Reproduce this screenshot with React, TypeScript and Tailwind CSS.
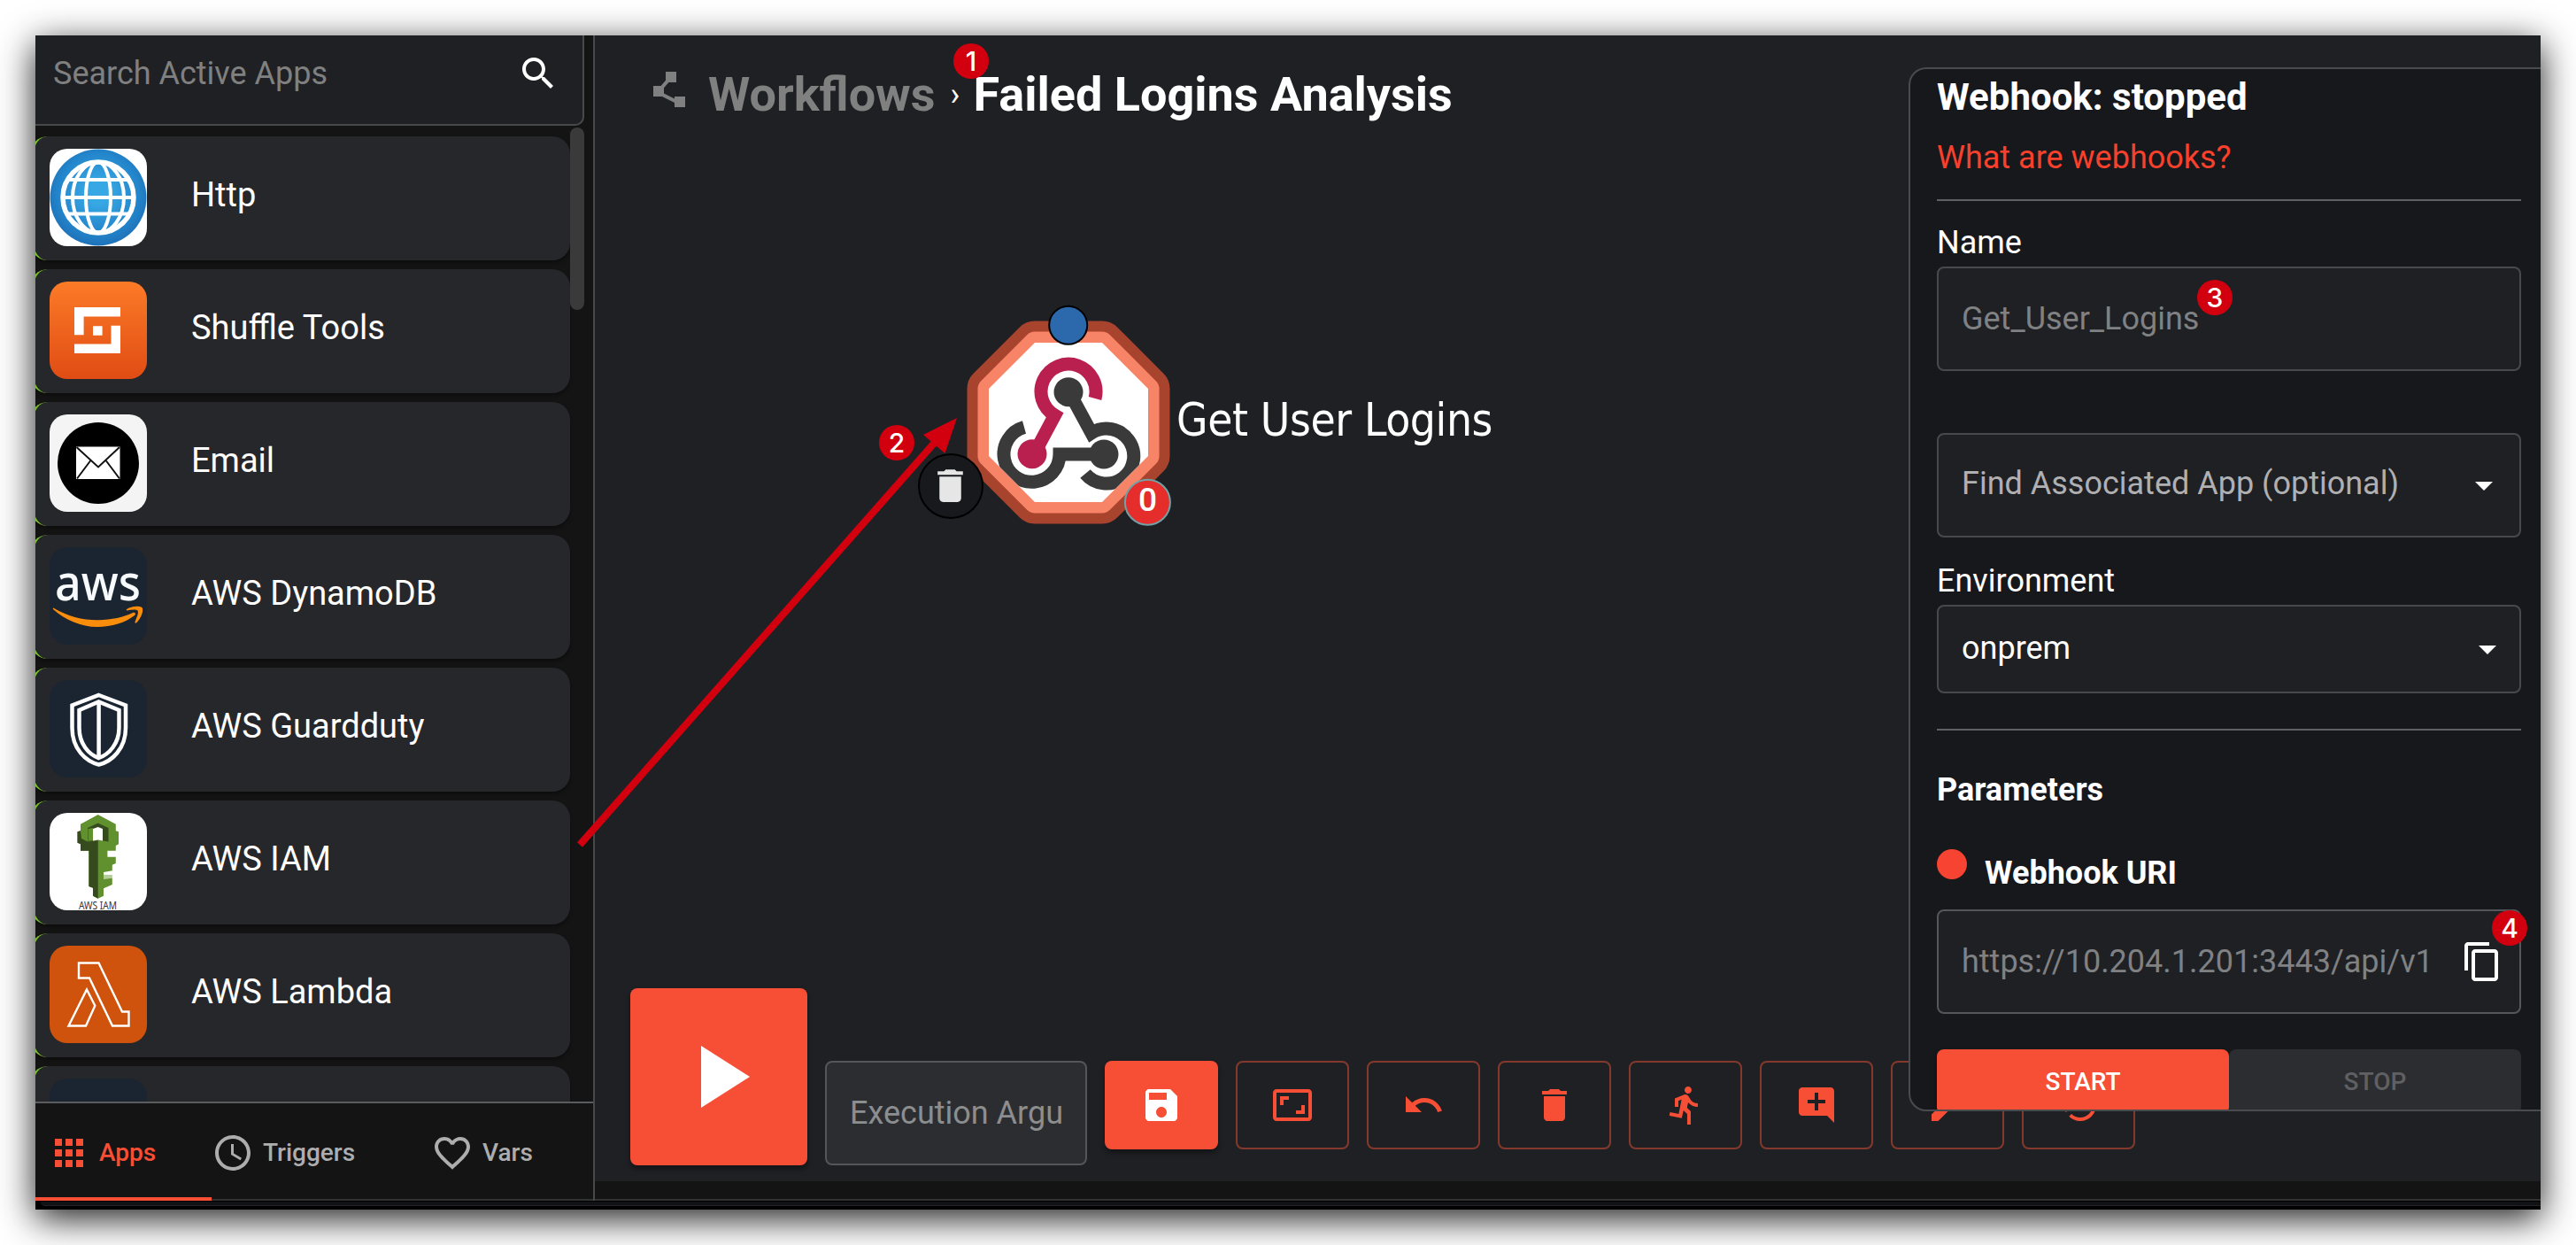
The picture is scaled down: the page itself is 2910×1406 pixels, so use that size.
import React from "react";

const PATHS = {
  search:
    "M15.5 14h-.79l-.28-.27C15.41 12.59 16 11.11 16 9.5 16 5.91 13.09 3 9.5 3S3 5.91 3 9.5 5.91 16 9.5 16c1.61 0 3.09-.59 4.23-1.57l.27.28v.79l5 4.99L20.49 19zm-6 0C7.01 14 5 11.99 5 9.5S7.01 5 9.5 5 14 7.01 14 9.5 11.99 14 9.5 14",
  polyline: "M15 16v1.26l-6-3v-3.17L11.7 8H16V2h-6v4.9L7.3 10H3v6h5l7 3.5V22h6v-6z",
  apps: "M4 8h4V4H4zm6 12h4v-4h-4zm-6 0h4v-4H4zm0-6h4v-4H4zm6 0h4v-4h-4zm6-10v4h4V4zm-6 4h4V4h-4zm6 6h4v-4h-4zm0 6h4v-4h-4z",
  clock:
    "M11.99 2C6.47 2 2 6.48 2 12s4.47 10 9.99 10C17.52 22 22 17.52 22 12S17.52 2 11.99 2M12 20c-4.42 0-8-3.58-8-8s3.58-8 8-8 8 3.58 8 8-3.58 8-8 8m.5-13H11v6l5.25 3.15.75-1.23-4.5-2.67z",
  heart:
    "M16.5 3c-1.74 0-3.41.81-4.5 2.09C10.91 3.81 9.24 3 7.5 3 4.42 3 2 5.42 2 8.5c0 3.78 3.4 6.86 8.55 11.54L12 21.35l1.45-1.32C18.6 15.36 22 12.28 22 8.5 22 5.42 19.58 3 16.5 3m-4.4 15.55-.1.1-.1-.1C7.14 14.24 4 11.39 4 8.5 4 6.5 5.5 5 7.5 5c1.54 0 3.04.99 3.57 2.36h1.87C13.46 5.99 14.96 5 16.5 5c2 0 3.5 1.5 3.5 3.5 0 2.89-3.14 5.74-7.9 10.05",
  play: "M8 5v14l11-7z",
  save: "M17 3H5c-1.11 0-2 .9-2 2v14c0 1.1.89 2 2 2h14c1.1 0 2-.9 2-2V7zm-5 16c-1.66 0-3-1.34-3-3s1.34-3 3-3 3 1.34 3 3-1.34 3-3 3m3-10H5V5h10z",
  aspect:
    "M19 12h-2v3h-3v2h5zM7 9h3V7H5v5h2zm14-6H3c-1.1 0-2 .9-2 2v14c0 1.1.9 2 2 2h18c1.1 0 2-.9 2-2V5c0-1.1-.9-2-2-2m0 16.01H3V4.99h18z",
  undo: "M12.5 8c-2.65 0-5.05.99-6.9 2.6L2 7v9h9l-3.62-3.62c1.39-1.16 3.16-1.88 5.12-1.88 3.54 0 6.55 2.31 7.6 5.5l2.37-.78C21.08 11.03 17.15 8 12.5 8",
  trash: "M6 19c0 1.1.9 2 2 2h8c1.1 0 2-.9 2-2V7H6zM19 4h-3.5l-1-1h-5l-1 1H5v2h14z",
  run: "M13.49 5.48c1.1 0 2-.9 2-2s-.9-2-2-2-2 .9-2 2 .9 2 2 2m-3.6 13.9 1-4.4 2.1 2v6h2v-7.5l-2.1-2 .6-3c1.3 1.5 3.3 2.5 5.5 2.5v-2c-1.9 0-3.5-1-4.3-2.4l-1-1.6c-.4-.6-1-1-1.7-1-.3 0-.5.1-.8.1l-5.2 2.2v4.7h2v-3.4l1.8-.7-1.6 8.1-4.9-1-.4 2z",
  comment:
    "M21.99 4c0-1.1-.89-2-1.99-2H4c-1.1 0-2 .9-2 2v12c0 1.1.9 2 2 2h14l4 4zM17 11h-4v4h-2v-4H7V9h4V5h2v4h4z",
  edit: "M3 17.25V21h3.75L17.81 9.94l-3.75-3.75zM20.71 7.04c.39-.39.39-1.02 0-1.41l-2.34-2.34a.9959.9959 0 0 0-1.41 0l-1.83 1.83 3.75 3.75z",
  history:
    "M13 3c-4.97 0-9 4.03-9 9H1l3.89 3.89.07.14L9 12H6c0-3.87 3.13-7 7-7s7 3.13 7 7-3.13 7-7 7c-1.93 0-3.68-.79-4.94-2.06l-1.42 1.42C8.27 19.99 10.51 21 13 21c4.97 0 9-4.03 9-9s-4.03-9-9-9m-1 5v5l4.28 2.54.72-1.21-3.5-2.08V8z",
  dropdown: "m7 10 5 5 5-5z",
  copy: "M16 1H4c-1.1 0-2 .9-2 2v14h2V3h12zm3 4H8c-1.1 0-2 .9-2 2v14c0 1.1.9 2 2 2h11c1.1 0 2-.9 2-2V7c0-1.1-.9-2-2-2m0 16H8V7h11z",
};

function Icon({ d, className = "size-12" }: { d: string; className?: string }) {
  return (
    <svg viewBox="0 0 24 24" fill="currentColor" className={`shrink-0 ${className}`}>
      <path d={d} />
    </svg>
  );
}

function HttpLogo() {
  return (
    <svg viewBox="0 0 110 110" className="size-full">
      <defs>
        <radialGradient id="globe" cx="0.5" cy="0.45" r="0.55">
          <stop offset="0.2" stopColor="#38a8e4" />
          <stop offset="0.75" stopColor="#2385cb" />
          <stop offset="1" stopColor="#1f72b9" />
        </radialGradient>
      </defs>
      <rect width="110" height="110" fill="#fff" />
      <circle cx="55" cy="55" r="54.5" fill="url(#globe)" />
      <g fill="none" stroke="#fff" strokeWidth="4">
        <circle cx="55" cy="55" r="40" strokeWidth="5.5" />
        <ellipse cx="55" cy="55" rx="29" ry="40" />
        <ellipse cx="55" cy="55" rx="14" ry="40" />
        <path d="M20 35H90M14 55H96M20 73.5H90" />
      </g>
    </svg>
  );
}

function ShuffleLogo() {
  return (
    <svg viewBox="0 0 110 110" className="size-full">
      <defs>
        <linearGradient id="shuffle" x1="0" y1="0" x2="0" y2="1">
          <stop offset="0" stopColor="#fc7b27" />
          <stop offset="1" stopColor="#e04c14" />
        </linearGradient>
      </defs>
      <rect width="110" height="110" fill="url(#shuffle)" />
      <path fill="#fff" d="M28 29H80V39.5H38.6V60.3H28ZM49 50.3H59.6V60.7H49ZM69.5 49.7H80V81H28V70.5H69.5Z" />
    </svg>
  );
}

function EmailLogo() {
  return (
    <svg viewBox="0 0 110 110" className="size-full">
      <rect width="110" height="110" fill="#f4f4f4" />
      <circle cx="55" cy="55" r="46" fill="#000" />
      <rect x="30" y="36.5" width="49.5" height="36.5" fill="#fff" />
      <path d="M30.5 37L55 59.5L79 37M31 72.5L46 52.5M79 72.5L64 52.5" fill="none" stroke="#111" strokeWidth="2" />
    </svg>
  );
}

function AwsLogo() {
  return (
    <svg viewBox="0 0 110 110" className="size-full">
      <rect width="110" height="110" fill="#1b2531" />
      <text
        x="6"
        y="60"
        textLength="97"
        lengthAdjust="spacingAndGlyphs"
        fontFamily="Noto Sans, sans-serif"
        fontWeight="500"
        fontSize="55.5"
        fill="#f7fbfd"
      >
        aws
      </text>
      <path d="M4.3 68.500C20 78 38 82.500 55 82.300C70 82 84 79 94 74C96.500 73 98 75.500 96 77C86 85 70 90 54 90C35 90 18 82 4.500 70.500C3.500 69.500 3.700 68.200 4.300 68.500Z" fill="#fa8d0c" />
      <path d="M86.500 70.500C92 66 101 66 104.500 68C106.500 71 104 80 98 85.500C96.500 86 96 85 97 83C98.500 79 101 74 99.500 71.500C97.500 70 92 70.500 87.500 71.500Z" fill="#fa8d0c" />
    </svg>
  );
}

function GuardLogo() {
  return (
    <svg viewBox="0 0 110 110" className="size-full">
      <rect width="110" height="110" fill="#1b2531" />
      <g fill="none" stroke="#fff" strokeWidth="4.500">
        <path d="M55.600 17L86 28.500V54C86 78 70 92 55.600 95.500C41 92 25.500 78 25.500 54V28.500Z" />
        <path d="M55.600 24.500L78.500 34V54C78.500 72 67 84 55.600 88C44 84 33.500 72 33.500 54V34Z" />
        <path d="M55.600 24V88" />
      </g>
    </svg>
  );
}

function IamLogo() {
  return (
    <svg viewBox="0 0 110 110" className="size-full">
      <rect width="110" height="110" fill="#fff" />
      <path
        fill="#61902f"
        d="M54.700 2L74.800 12.700V20.300L78 21.300V35.300L74.800 37V42.700H65.400V49.700H74.800V57L70.800 58.700V65.300L61 67V69.700L70.800 73.700V81L61 85.300V93.700L54.700 96.700L49 93.700V84.700L44.400 83V42.700H35V35.300L31.500 33.700V21.300L35 20.300V12.700Z"
      />
      <path fill="#364b1d" d="M54.700 31V96.700L49 93.700V84.700L44.400 83V42.700H35V35.300L31.500 33.700V21.300L35 20.300L36 29L43 32.500Z" />
      <path fill="#364b1d" d="M43 17L54.700 11.500L66.500 17V32.500L54.700 30.500L43 32.500Z" />
      <path fill="#61902f" d="M43.500 18L49 17V31L43.500 32Z" />
      <path fill="#fff" d="M49 18L54.700 16L60 18V31.500L54.700 30.500L49 31.500Z" />
      <path fill="#b5cc9b" d="M61 69.700L70.800 70V73.700L61 75Z" />
      <text
        x="33"
        y="108.500"
        textLength="43"
        lengthAdjust="spacingAndGlyphs"
        fontFamily="Noto Sans, sans-serif"
        fontSize="12"
        fill="#333"
      >
        AWS IAM
      </text>
    </svg>
  );
}

function LambdaLogo() {
  return (
    <svg viewBox="0 0 110 110" className="size-full">
      <rect width="110" height="110" fill="#cf520d" />
      <g fill="none" stroke="#fff" strokeWidth="2.400">
        <path d="M33 19.500H55.500L82 74.500H89.500V90.500H71L45 36.500H33Z" />
        <path d="M42 49.500L51.300 67.700L41 90.500H21.500Z" />
      </g>
    </svg>
  );
}

function BlankLogo() {
  return <div className="size-full bg-[#1b2531]" />;
}

const APPS = [
  { name: "Http", Logo: HttpLogo },
  { name: "Shuffle Tools", Logo: ShuffleLogo },
  { name: "Email", Logo: EmailLogo },
  { name: "AWS DynamoDB", Logo: AwsLogo },
  { name: "AWS Guardduty", Logo: GuardLogo },
  { name: "AWS IAM", Logo: IamLogo },
  { name: "AWS Lambda", Logo: LambdaLogo },
  { name: "", Logo: BlankLogo },
];

const ACTIONS = [
  PATHS.aspect,
  PATHS.undo,
  PATHS.trash,
  PATHS.run,
  PATHS.comment,
  PATHS.edit,
  PATHS.history,
];

function Sidebar() {
  return (
    <aside className="flex w-[632px] shrink-0 flex-col border-r-2 border-[#48494b] bg-[#141414]">
      <div className="flex h-[102px] w-[620px] shrink-0 items-start justify-between rounded-br-[10px] border-r-2 border-b-2 border-[#48494b] bg-[#1f2024] pl-5 pr-[26px] pt-[19px]">
        <span className="mt-px text-[36px] leading-[46px] text-[#808080]">Search Active Apps</span>
        <Icon d={PATHS.search} className="size-12 text-white" />
      </div>
      <div className="flex h-[1102px] shrink-0 overflow-hidden">
        <div className="-ml-1.5 flex w-[610px] shrink-0 flex-col gap-2.5 pt-3">
          {APPS.map(({ name, Logo }) => (
            <div
              key={name}
              className="flex h-[140px] shrink-0 items-start rounded-[20px] border-l-4 border-[#7ac52e] bg-[#26272b] pl-[18px] pt-3.5 shadow-[0_3px_4px_rgba(0,0,0,0.35)]"
            >
              <div className="size-[110px] shrink-0 overflow-hidden rounded-[20px]">
                <Logo />
              </div>
              <span className="ml-[50px] mt-[29px] text-[38px] leading-[46px] text-white">{name}</span>
            </div>
          ))}
        </div>
        <div className="mt-0.5 h-[206px] w-4 rounded-full bg-[#3a3a3a]" />
      </div>
      <nav className="flex h-[112px] shrink-0 border-t-2 border-b-2 border-t-[#5a5c60] border-b-[#333] text-[28px] font-medium text-[#adadad]">
        <div className="-mb-0.5 flex w-[199px] items-center gap-[10px] border-b-4 border-[#f64f36] pl-3.5 pt-1.5 text-[#f64f36]">
          <Icon d={PATHS.apps} />
          <span>Apps</span>
        </div>
        <div className="flex w-[248px] items-center gap-[10px] pt-1">
          <Icon d={PATHS.clock} />
          <span>Triggers</span>
        </div>
        <div className="flex items-center gap-[10px] pt-1">
          <Icon d={PATHS.heart} />
          <span>Vars</span>
        </div>
      </nav>
    </aside>
  );
}

function Breadcrumb() {
  return (
    <div className="flex items-start pl-[60px] pt-[37px]">
      <Icon d={PATHS.polyline} className="size-12 text-[#808080]" />
      <span className="ml-5 text-[54px] leading-[60px] font-bold text-[#808080]">Workflows</span>
      <span className="ml-[17px] mt-2.5 w-[9px] text-[36px] leading-[40px] text-white">›</span>
      <span className="ml-[17px] text-[54px] leading-[60px] font-bold text-white">Failed Logins Analysis</span>
    </div>
  );
}

/* Canvas node; its SVG uses the same coordinate space as the page. */
function WebhookNode() {
  const octagon = "1169,387 1245,387 1297,439 1297,515 1245,567 1169,567 1117,515 1117,439";
  return (
    <>
      <svg viewBox="1030 330 310 280" className="absolute left-[358px] top-[290px] h-[280px] w-[310px]">
        <defs>
          <clipPath id="node-clip">
            <polygon points={octagon} />
          </clipPath>
        </defs>
        <polygon points={octagon} fill="none" stroke="#a8432d" strokeWidth="49" strokeLinejoin="round" />
        <polygon points={octagon} fill="#fff" stroke="#f88467" strokeWidth="25" strokeLinejoin="round" />
        <polygon points={octagon} fill="#fff" />
        <g clipPath="url(#node-clip)" fill="none" strokeWidth="15">
          <path d="M1237 450A31 31 0 1 0 1191.500 469L1168 513" stroke="#b92050" />
          <circle cx="1166" cy="512.700" r="16.500" fill="#b92050" />
          <path d="M1157 482.500A31.500 31.500 0 1 0 1197 513L1247 513" stroke="#3a3a3a" />
          <path d="M1208 443L1233 489A31 31 0 1 1 1226 535" stroke="#3a3a3a" />
          <circle cx="1207" cy="442.700" r="16.500" fill="#3a3a3a" />
          <circle cx="1247" cy="513" r="16.500" fill="#3a3a3a" />
        </g>
        <circle cx="1206.700" cy="367.300" r="21.500" fill="#2b68ac" stroke="#000" strokeWidth="2" />
        <circle cx="1074" cy="549" r="36" fill="#17191c" stroke="#000" strokeWidth="2" />
        <circle cx="1296.400" cy="567.300" r="25.500" fill="#e52e2b" stroke="#72a2a6" strokeWidth="2" />
      </svg>
      <Icon d={PATHS.trash} className="absolute left-[377px] top-[484px] size-[49px] text-[#e6e6e6]" />
      <span className="absolute left-[604px] top-[502px] w-[41px] text-center text-[37px] leading-[46px] font-medium text-white">0</span>
      <span className="absolute left-[657px] top-[400px] whitespace-nowrap font-['DejaVu_Sans_Condensed','DejaVu_Sans',sans-serif] text-[51px] leading-[70px] tracking-[-0.400px] text-white [font-stretch:condensed]">
        Get User Logins
      </span>
    </>
  );
}

function Toolbar() {
  return (
    <div className="flex items-end gap-5 pl-10">
      <button className="flex size-[200px] items-center justify-center rounded-lg bg-[#f64f36] text-white shadow-[0_4px_6px_rgba(0,0,0,0.4)]">
        <Icon d={PATHS.play} className="size-[120px]" />
      </button>
      <div className="flex h-[118px] w-[296px] items-center rounded-lg border-2 border-[#55565a] bg-[#2c2d31] px-[26px]">
        <span className="whitespace-nowrap text-[36px] leading-[46px] text-[#8c8d8f]">Execution Argu</span>
      </div>
      <div className="flex h-[118px] items-start gap-5">
        <button className="flex h-[100px] w-32 items-center justify-center rounded-lg bg-[#f64f36] text-white shadow-[0_4px_6px_rgba(0,0,0,0.4)]">
          <Icon d={PATHS.save} />
        </button>
        {ACTIONS.map((d) => (
          <button
            key={d}
            className="flex h-[100px] w-32 shrink-0 items-center justify-center rounded-lg border-2 border-[#84392d] text-[#f64f36]"
          >
            <Icon d={d} />
          </button>
        ))}
      </div>
    </div>
  );
}

function Field({ children, className = "" }: { children: React.ReactNode; className?: string }) {
  return (
    <div
      className={`flex shrink-0 items-center justify-between rounded-lg border-2 pl-[26px] text-[36px] leading-[46px] bg-[#1f2024] ${className}`}
    >
      {children}
    </div>
  );
}

function WebhookPanel() {
  return (
    <section className="absolute top-9 right-0 flex h-[1179px] w-[714px] flex-col overflow-hidden rounded-l-[20px] border-2 border-r-0 border-[#4a4b4f] bg-[#17181c] pl-[30px] pr-[22px] text-white">
      <h2 className="mt-[7px] text-[42px] leading-[50px] font-bold">Webhook: stopped</h2>
      <a className="mt-5 text-[36px] leading-[46px] text-[#f7412d]">What are webhooks?</a>
      <hr className="mt-6 shrink-0 border-t-2 border-[#606163]" />
      <label className="mt-6 text-[36px] leading-[46px]">Name</label>
      <Field className="mt-1 h-[118px] border-[#48494c] text-[#808183]">
        <span>Get_User_Logins</span>
      </Field>
      <Field className="mt-[70px] h-[118px] border-[#48494c] pr-4 text-[#b0b0b2]">
        <span className="-mt-1">Find Associated App (optional)</span>
        <Icon d={PATHS.dropdown} className="size-12 text-white" />
      </Field>
      <label className="mt-[26px] text-[36px] leading-[46px]">Environment</label>
      <Field className="mt-1 h-[100px] border-[#48494c] pr-3">
        <span className="-mt-0.5">onprem</span>
        <Icon d={PATHS.dropdown} className="size-12 text-white" />
      </Field>
      <hr className="mt-10 shrink-0 border-t-2 border-[#606163]" />
      <h3 className="mt-[44px] text-[36px] leading-[46px] font-bold">Parameters</h3>
      <div className="mt-[44px] flex items-start">
        <span className="size-[34px] rounded-full bg-[#f74331]" />
        <span className="ml-5 mt-1 text-[36px] leading-[46px] font-bold">Webhook URI</span>
      </div>
      <Field className="mt-[18px] h-[118px] border-[#55565a] pr-[18px] text-[#808183]">
        <span className="whitespace-nowrap">https://10.204.1.201:3443/api/v1</span>
        <Icon d={PATHS.copy} className="size-12 text-white" />
      </Field>
      <div className="mt-10 flex shrink-0 text-[28px] font-medium">
        <button className="h-[73px] flex-1 rounded-lg bg-[#f64f36] text-white shadow-[0_4px_6px_rgba(0,0,0,0.4)]">START</button>
        <button className="h-[73px] flex-1 rounded-lg bg-[#2c2d30] text-[#5f6063]">STOP</button>
      </div>
    </section>
  );
}

function StepBadge({ n, className }: { n: number; className: string }) {
  return (
    <span
      className={`absolute flex size-10 items-center justify-center rounded-full bg-[#d2000f] font-[Inter,sans-serif] text-[30px] font-medium text-white ${className}`}
    >
      {n}
    </span>
  );
}

export default function App() {
  return (
    <div className="h-[1406px] w-[2910px] overflow-hidden bg-white p-10 font-[Roboto,sans-serif]">
      <div className="relative flex h-[1326px] w-[2830px] flex-col bg-black shadow-[0_10px_38px_rgba(0,0,0,0.89)]">
        <div className="flex h-[1316px] shrink-0">
          <Sidebar />
          <main className="relative flex min-w-0 flex-1 flex-col overflow-hidden bg-[#1f2024]">
            <div className="flex h-[1294px] shrink-0 flex-col justify-between pb-[18px]">
              <Breadcrumb />
              <Toolbar />
            </div>
            <WebhookNode />
            <div className="h-[22px] shrink-0 border-b-2 border-[#333] bg-[#141414]" />
            <WebhookPanel />
          </main>
        </div>
        <div className="mt-px ml-1.5 h-[5px] rounded-bl-lg border-b border-[#222326] bg-[#111216]" />
        <svg viewBox="0 0 2830 1326" className="pointer-events-none absolute inset-0 size-full">
          <path d="M615 914L1020 455" stroke="#d2000f" strokeWidth="8" />
          <polygon points="1041,432 1003,451 1027.500,472" fill="#d2000f" />
        </svg>
        <StepBadge n={1} className="left-[1037px] top-[9px]" />
        <StepBadge n={2} className="left-[953px] top-[440px]" />
        <StepBadge n={3} className="left-[2442px] top-[276px]" />
        <StepBadge n={4} className="left-[2775px] top-[988px]" />
      </div>
    </div>
  );
}
